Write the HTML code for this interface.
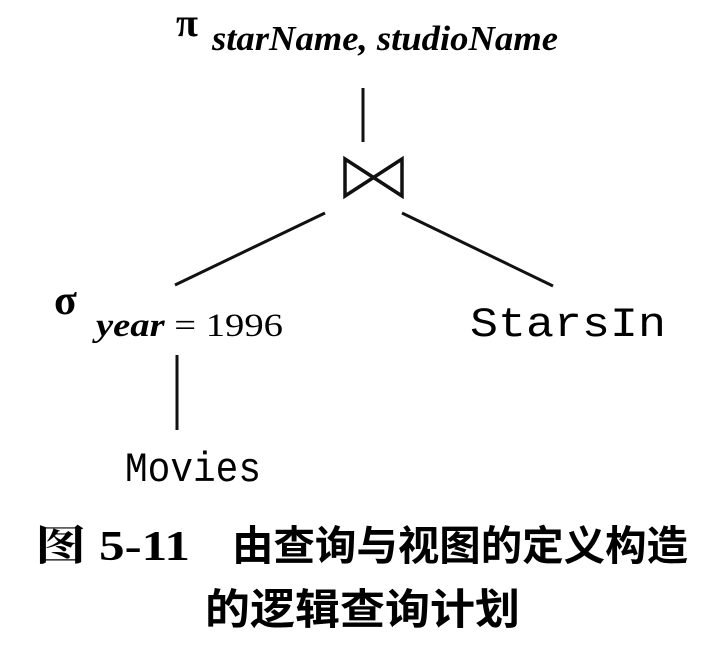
<html><body style="margin:0;width:728px;height:660px;background:#fff;position:relative;overflow:hidden;color:#111">
<svg width="728" height="660" style="position:absolute;left:0;top:0">
<g stroke="#111" stroke-width="3" fill="none">
<line x1="363" y1="88" x2="363" y2="142"/>
<path d="M345 159 L345 196 L402 159 L402 196 Z" stroke-width="3.5"/>
<line x1="325" y1="213" x2="175" y2="285"/>
<line x1="402" y1="213" x2="553" y2="286"/>
<line x1="177" y1="355" x2="177" y2="430"/>
</g>
<text x="176" y="36" font-family="Liberation Serif" font-size="40" font-weight="bold">π</text>
<text x="212" y="50" font-family="Liberation Serif" font-size="35" font-style="italic" font-weight="bold" textLength="346" lengthAdjust="spacingAndGlyphs">starName, studioName</text>
<text x="54" y="314" font-family="Liberation Serif" font-size="42" font-weight="bold">σ</text>
<text x="96" y="336" font-family="Liberation Serif" font-size="33" textLength="187" lengthAdjust="spacingAndGlyphs"><tspan font-style="italic" font-weight="bold">year</tspan> = 1996</text>
<text x="470" y="336" font-family="Liberation Mono" font-size="42" textLength="196" lengthAdjust="spacingAndGlyphs">StarsIn</text>
<text x="125" y="481" font-family="Liberation Mono" font-size="42" textLength="136" lengthAdjust="spacingAndGlyphs">Movies</text>
<text x="35" y="560" font-family="Liberation Serif, Noto Serif CJK SC, serif" font-size="42" font-weight="bold" textLength="155" lengthAdjust="spacingAndGlyphs">图 5-11</text>
<text x="232" y="560" font-family="Noto Sans CJK SC, sans-serif" font-size="41" font-weight="bold" textLength="456" lengthAdjust="spacingAndGlyphs">由查询与视图的定义构造</text>
<text x="205" y="624" font-family="Noto Sans CJK SC, sans-serif" font-size="42" font-weight="bold" textLength="315" lengthAdjust="spacingAndGlyphs">的逻辑查询计划</text>
</svg>
</body></html>
